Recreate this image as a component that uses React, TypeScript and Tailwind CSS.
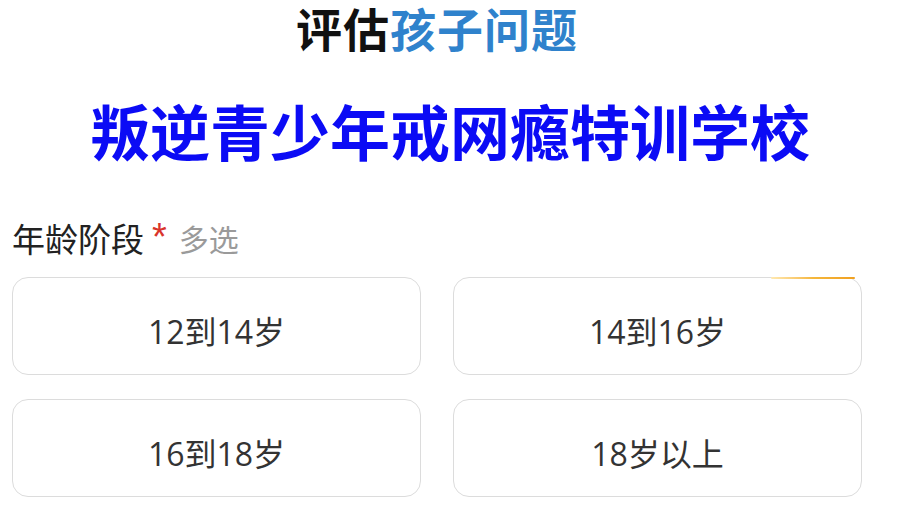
import React from "react";

const cjk = { fontFamily: '"Noto Sans CJK SC", "Noto Sans", sans-serif' };
const mixed = { fontFamily: '"Open Sans", "Noto Sans CJK SC", sans-serif' };

function Card({ label, accent }: { label: string; accent?: boolean }) {
  return (
    <div className="relative h-[98px] rounded-[16px] border border-[#dcdcdc] bg-white flex items-center justify-center pt-[11px]">
      {accent && (
        <div className="absolute top-[-1px] right-[6px] h-[2px] w-[84px] bg-gradient-to-r from-[#ffe9b0] via-[#f5b73b] to-[#f0a020] rounded-full" />
      )}
      <span className="text-[32px] text-[#333333] leading-tight" style={mixed}>
        {label}
      </span>
    </div>
  );
}

export default function App() {
  return (
    <div className="w-[900px] h-[517px] bg-white overflow-hidden" style={cjk}>
      <div className="pt-[1px] flex justify-center pr-[26px] text-[46px] font-bold leading-[52px] tracking-[1px]">
        <span className="inline-block h-[52px] text-[#111111]">评估</span>
        <span className="inline-block h-[52px] text-[#2f82cc]">孩子问题</span>
      </div>
      <div className="h-[153px] flex items-center justify-center">
        <span className="text-[60px] font-bold leading-tight text-[#0b0bf5]">
          叛逆青少年戒网瘾特训学校
        </span>
      </div>
      <div className="h-[71px] flex items-center pl-[12px] pb-[5px]">
        <span className="text-[33px] text-[#222222] leading-tight">年龄阶段</span>
        <span className="text-[38px] text-[#d9342b] leading-tight ml-[8px] mt-[-2px]" style={{ fontFamily: '"Liberation Sans", sans-serif' }}>*</span>
        <span className="text-[30px] text-[#9a9a9a] leading-tight ml-[12px]">多选</span>
      </div>
      <div className="grid grid-cols-2 gap-x-[32px] gap-y-[24px] pl-[12px] pr-[38px]">
        <Card label="12到14岁" />
        <Card label="14到16岁" accent />
        <Card label="16到18岁" />
        <Card label="18岁以上" />
      </div>
    </div>
  );
}
